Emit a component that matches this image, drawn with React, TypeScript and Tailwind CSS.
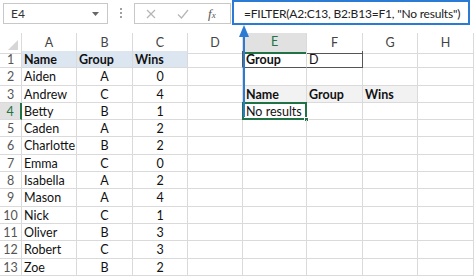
import React from "react";

const COLS = ["A", "B", "C", "D", "E", "F", "G", "H"];

type Row = { a?: string; b?: string; c?: string; e?: string; f?: string; g?: string };

const ROWS: Row[] = [
  { a: "Name", b: "Group", c: "Wins", e: "Group", f: "D" },
  { a: "Aiden", b: "A", c: "0" },
  { a: "Andrew", b: "C", c: "4", e: "Name", f: "Group", g: "Wins" },
  { a: "Betty", b: "B", c: "1", e: "No results" },
  { a: "Caden", b: "A", c: "2" },
  { a: "Charlotte", b: "B", c: "2" },
  { a: "Emma", b: "C", c: "0" },
  { a: "Isabella", b: "A", c: "2" },
  { a: "Mason", b: "A", c: "4" },
  { a: "Nick", b: "C", c: "1" },
  { a: "Oliver", b: "B", c: "3" },
  { a: "Robert", b: "C", c: "3" },
  { a: "Zoe", b: "B", c: "2" },
];

const grid = "grid grid-cols-[22px_55px_56px_55px_55px_64px_56px_55px_56px]";
const cell = "h-[17.3px] border-r border-b border-[#dadada] px-[2px] leading-[17px] whitespace-nowrap overflow-visible";

function Toolbar() {
  return (
    <div className="flex h-[33px] items-start">
      <div className="ml-[3px] mt-[3px] flex h-[21px] w-[105px] items-center justify-between border border-[#c8c8c8] pl-[7px] pr-[8px] text-[12px] text-[#333]">
        <span>E4</span>
        <svg width="7" height="4" viewBox="0 0 7 4">
          <path d="M0 0h7L3.5 4z" fill="#666" />
        </svg>
      </div>
      <div className="mx-[12px] mt-[8px] flex flex-col gap-[2px]">
        <span className="h-[2px] w-[2px] bg-[#a0a0a0]" />
        <span className="h-[2px] w-[2px] bg-[#a0a0a0]" />
        <span className="h-[2px] w-[2px] bg-[#a0a0a0]" />
      </div>
      <div className="mt-[3px] flex h-[21px] w-[97px] items-center border border-[#c8c8c8]">
        <svg className="ml-[11px]" width="10" height="10" viewBox="0 0 10 10">
          <path d="M1 1l8 8M9 1L1 9" stroke="#b5b5b5" strokeWidth="1.2" />
        </svg>
        <svg className="ml-[21px]" width="12" height="10" viewBox="0 0 12 10">
          <path d="M1 5.5l3.5 3.5L11 1" stroke="#b5b5b5" strokeWidth="1.2" fill="none" />
        </svg>
        <span className="ml-[19px] font-['Liberation_Serif',serif] text-[13px] italic text-[#555]">
          f<span className="text-[9px]">x</span>
        </span>
      </div>
      <div className="ml-[1px] flex h-[25px] w-[238px] items-center overflow-hidden whitespace-nowrap border-2 border-[#2b7bd4] pl-[10px] pt-[2px] font-['Lato',sans-serif] text-[12px] tracking-[-0.2px] text-[#222]">
        =FILTER(A2:C13, B2:B13=F1, "No results")
      </div>
    </div>
  );
}

function HeaderRow() {
  return (
    <div className={`${grid} h-[18px] text-[12.5px] text-[#444]`}>
      <div className="relative border-r border-b border-[#dadada]">
        <svg className="absolute bottom-[3px] right-[3px]" width="10" height="10" viewBox="0 0 10 10">
          <path d="M10 0v10H0z" fill="#d6d6d6" />
        </svg>
      </div>
      {COLS.map((c) => (
        <div
          key={c}
          className={
            c === "E"
              ? "flex items-center justify-center border-r border-b-2 border-r-[#dadada] border-b-[#217346] bg-[#e1e1e1] text-[#217346]"
              : c === "F"
                ? "flex items-center justify-center border-r border-b border-r-[#dadada] border-b-[#555]"
                : "flex items-center justify-center border-r border-b border-[#dadada]"
          }
        >
          {c}
        </div>
      ))}
    </div>
  );
}

function SheetRow({ r, i }: { r: Row; i: number }) {
  const n = i + 1;
  const blue = n === 1 ? "bg-[#dce6f1] font-bold" : "";
  const gray = n === 3 ? "bg-[#f2f2f2] font-bold" : "";
  return (
    <div className={`${grid} font-['Lato',sans-serif] text-[12.5px] text-[#111]`}>
      <div
        className={
          n === 4
            ? "h-[17.3px] border-r-2 border-b border-r-[#217346] border-b-[#dadada] bg-[#e1e1e1] text-center text-[12.5px] leading-[17px] text-[#217346]"
            : "h-[17.3px] border-r border-b border-[#dadada] text-center text-[12.5px] leading-[17px] text-[#555]"
        }
      >
        {n}
      </div>
      <div className={`${cell} ${blue}`}>{r.a}</div>
      <div className={`${cell} ${blue} ${n === 1 ? "text-left" : "text-center"}`}>{r.b}</div>
      <div className={`${cell} ${blue} ${n === 1 ? "text-left" : "text-center"}`}>{r.c}</div>
      <div className={`${cell} ${n === 1 ? "border-r-[#555]" : ""}`}></div>
      <div className={`${cell} relative pl-[3px] ${gray} ${n === 1 ? "border-b-[#555] font-bold" : ""}`}>
        {r.e}
        {n === 4 && (
          <>
            <span className="absolute -top-[1px] -left-[1px] h-[18.3px] w-[65px] border-2 border-[#217346]" />
            <span className="absolute -bottom-[3px] -right-[3px] h-[5px] w-[5px] border border-white bg-[#217346]" />
          </>
        )}
      </div>
      <div className={`${cell} pl-[2px] ${gray} ${n === 1 ? "border-b-[#555] border-r-[#555]" : ""}`}>
        {r.f}
      </div>
      <div className={`${cell} ${gray}`}>{r.g}</div>
      <div className={cell}></div>
    </div>
  );
}

export default function App() {
  return (
    <div className="relative h-[276px] w-[474px] overflow-hidden bg-white font-['Lato',sans-serif]">
      <Toolbar />
      <HeaderRow />
      {ROWS.map((r, i) => (
        <SheetRow key={i} r={r} i={i} />
      ))}
      {/* arrow from formula bar down to E4 */}
      <svg className="absolute left-[238px] top-[25px]" width="12" height="92" viewBox="0 0 12 92">
        <path d="M6 0L11 12H1z" fill="#2b7bd4" />
        <path d="M6 10V92" stroke="#2b7bd4" strokeWidth="2" />
      </svg>
    </div>
  );
}
